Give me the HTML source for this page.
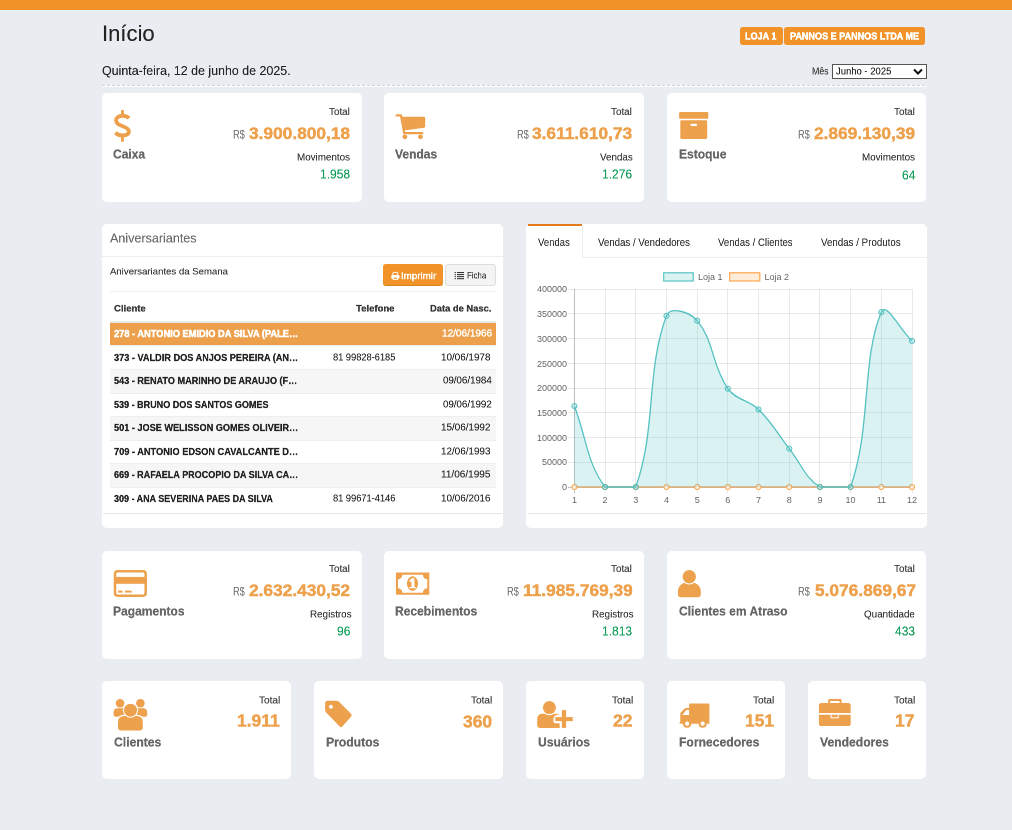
<!DOCTYPE html>
<html><head><meta charset="utf-8"><title>Início</title>
<style>
html,body{margin:0;padding:0}
body{width:1012px;height:830px;background:#e9edf1;position:relative;overflow:hidden;font-family:"Liberation Sans",sans-serif}
.t{position:absolute;white-space:nowrap;transform-origin:0 0;will-change:transform}
.b{position:absolute}
svg text{font-family:"Liberation Sans",sans-serif}
</style></head><body>
<div class="b" style="left:0px;top:0px;width:1012.00px;height:10.00px;background:#f29329"></div>
<div class="b" style="left:0px;top:10px;width:1012.00px;height:1.00px;background:#e6f0fa"></div>
<div class="t" style="left:101.82px;top:22.54px;font-size:43.60px;line-height:43.60px;font-weight:normal;color:#222;-webkit-text-stroke:0.24px #222;transform:scale(0.50487,0.5)">Início</div>
<div class="t" style="left:102.34px;top:63.92px;font-size:26.45px;line-height:26.45px;font-weight:normal;color:#222;-webkit-text-stroke:0.24px #222;transform:scale(0.47005,0.5)">Quinta-feira, 12 de junho de 2025.</div>
<div class="b" style="left:740px;top:27px;width:43.00px;height:18.00px;background:#f19329;border-radius:3px"></div>
<div class="b" style="left:784.2px;top:27px;width:140.80px;height:18.00px;background:#f19329;border-radius:3px"></div>
<div class="t" style="left:745.44px;top:30.75px;font-size:20.06px;line-height:20.06px;font-weight:bold;color:#fff;-webkit-text-stroke:1.10px #fff;transform:scale(0.45166,0.5)">LOJA 1</div>
<div class="t" style="left:790.00px;top:30.75px;font-size:20.06px;line-height:20.06px;font-weight:bold;color:#fff;-webkit-text-stroke:1.10px #fff;transform:scale(0.45198,0.5)">PANNOS E PANNOS LTDA ME</div>
<div class="t" style="left:812.30px;top:65.80px;font-size:20.93px;line-height:20.93px;font-weight:normal;color:#333;-webkit-text-stroke:0.24px #333;transform:scale(0.41850,0.5)">Mês</div>
<div class="b" style="left:832px;top:64px;width:95.00px;height:15.00px;background:#fff;border:1px solid #555;box-sizing:border-box"></div>
<div class="t" style="left:835.72px;top:66.39px;font-size:20.35px;line-height:20.35px;font-weight:normal;color:#222;-webkit-text-stroke:0.24px #222;transform:scale(0.46597,0.5)">Junho - 2025</div>
<svg class="b" style="left:912px;top:68px" width="12" height="8" viewBox="0 0 12 8"><path d="M2 1.5 L6 5.5 L10 1.5" fill="none" stroke="#111" stroke-width="2"/></svg>
<div class="b" style="left:102px;top:85px;width:824.00px;height:1.00px;background:repeating-linear-gradient(90deg,#cdd2d7 0 3px,#fff 3px 5px)"></div>
<div class="b" style="left:102px;top:86px;width:824.00px;height:1.00px;background:#fff"></div>
<div class="b" style="left:102px;top:93px;width:260.00px;height:109.00px;background:#fff;border-radius:5px"></div>
<div class="b" style="left:384px;top:93px;width:260.00px;height:109.00px;background:#fff;border-radius:5px"></div>
<div class="b" style="left:666.5px;top:93px;width:259.50px;height:109.00px;background:#fff;border-radius:5px"></div>
<div class="t" style="left:329.49px;top:107.09px;font-size:19.77px;line-height:19.77px;font-weight:normal;color:#333;-webkit-text-stroke:0.24px #333;transform:scale(0.50000,0.5)">Total</div>
<div class="t" style="left:249.25px;top:124.85px;font-size:33.43px;line-height:33.43px;font-weight:bold;color:#eea14c;-webkit-text-stroke:0.90px #eea14c;transform:scale(0.51800,0.5)">3.900.800,18</div>
<div class="t" style="left:233.39px;top:129.16px;font-size:23.26px;line-height:23.26px;font-weight:normal;color:#777;-webkit-text-stroke:0.24px #777;transform:scale(0.39500,0.5)">R$</div>
<div class="t" style="left:297.33px;top:152.16px;font-size:20.93px;line-height:20.93px;font-weight:normal;color:#333;-webkit-text-stroke:0.24px #333;transform:scale(0.47000,0.5)">Movimentos</div>
<div class="t" style="left:320.34px;top:168.42px;font-size:25.00px;line-height:25.00px;font-weight:normal;color:#079a53;-webkit-text-stroke:0.24px #079a53;transform:scale(0.48000,0.5)">1.958</div>
<div class="t" style="left:113.42px;top:148.05px;font-size:25.87px;line-height:25.87px;font-weight:bold;color:#666;-webkit-text-stroke:0.50px #666;transform:scale(0.46500,0.5)">Caixa</div>
<div class="t" style="left:611.49px;top:107.09px;font-size:19.77px;line-height:19.77px;font-weight:normal;color:#333;-webkit-text-stroke:0.24px #333;transform:scale(0.50000,0.5)">Total</div>
<div class="t" style="left:532.20px;top:124.85px;font-size:33.43px;line-height:33.43px;font-weight:bold;color:#eea14c;-webkit-text-stroke:0.90px #eea14c;transform:scale(0.51800,0.5)">3.611.610,73</div>
<div class="t" style="left:516.52px;top:129.16px;font-size:23.26px;line-height:23.26px;font-weight:normal;color:#777;-webkit-text-stroke:0.24px #777;transform:scale(0.39500,0.5)">R$</div>
<div class="t" style="left:599.54px;top:152.16px;font-size:20.93px;line-height:20.93px;font-weight:normal;color:#333;-webkit-text-stroke:0.24px #333;transform:scale(0.47000,0.5)">Vendas</div>
<div class="t" style="left:602.34px;top:168.42px;font-size:25.00px;line-height:25.00px;font-weight:normal;color:#079a53;-webkit-text-stroke:0.24px #079a53;transform:scale(0.48000,0.5)">1.276</div>
<div class="t" style="left:395.42px;top:148.05px;font-size:25.87px;line-height:25.87px;font-weight:bold;color:#666;-webkit-text-stroke:0.50px #666;transform:scale(0.46500,0.5)">Vendas</div>
<div class="t" style="left:893.99px;top:107.09px;font-size:19.77px;line-height:19.77px;font-weight:normal;color:#333;-webkit-text-stroke:0.24px #333;transform:scale(0.50000,0.5)">Total</div>
<div class="t" style="left:813.75px;top:124.85px;font-size:33.43px;line-height:33.43px;font-weight:bold;color:#eea14c;-webkit-text-stroke:0.90px #eea14c;transform:scale(0.51800,0.5)">2.869.130,39</div>
<div class="t" style="left:797.89px;top:129.16px;font-size:23.26px;line-height:23.26px;font-weight:normal;color:#777;-webkit-text-stroke:0.24px #777;transform:scale(0.39500,0.5)">R$</div>
<div class="t" style="left:861.83px;top:152.16px;font-size:20.93px;line-height:20.93px;font-weight:normal;color:#333;-webkit-text-stroke:0.24px #333;transform:scale(0.47000,0.5)">Movimentos</div>
<div class="t" style="left:901.52px;top:169.22px;font-size:25.00px;line-height:25.00px;font-weight:normal;color:#079a53;-webkit-text-stroke:0.24px #079a53;transform:scale(0.48000,0.5)">64</div>
<div class="t" style="left:678.72px;top:148.05px;font-size:25.87px;line-height:25.87px;font-weight:bold;color:#666;-webkit-text-stroke:0.50px #666;transform:scale(0.46500,0.5)">Estoque</div>
<svg class="b" style="left:108px;top:105px" width="30" height="40" viewBox="108 105 30 40">
<path d="M129.2,118.0 C127.4,116.4 125,115.7 122.6,115.7 C118.6,115.7 116.1,117.7 116.1,120.5 C116.1,124.2 119.8,125.1 123.4,126.5 C127,127.9 128.9,129.4 128.9,131.6 C128.9,134.3 126.2,135.5 122.6,135.5 C119.6,135.5 117.1,134.4 115.4,132.6" fill="none" stroke="#eea14c" stroke-width="3.85"/>
<rect x="121.0" y="110.1" width="2.9" height="5" fill="#eea14c"/>
<rect x="121.0" y="135.5" width="2.9" height="6.2" fill="#eea14c"/>
</svg>
<svg class="b" style="left:390px;top:110px" width="40" height="32" viewBox="390 110 40 32">
<path d="M396.6,115.4 H401.0 L404.3,133.2 H422.3" fill="none" stroke="#eea14c" stroke-width="2.3" stroke-linecap="round" stroke-linejoin="round"/>
<path d="M401.3,116.8 H424 Q425.2,116.8 425.2,118 V126.6 Q425.2,127.6 424.2,127.8 L403.9,130.4 Z" fill="#eea14c"/>
<circle cx="404.9" cy="136.8" r="2.4" fill="#eea14c"/><circle cx="420.5" cy="136.8" r="2.4" fill="#eea14c"/>
</svg>
<svg class="b" style="left:679px;top:112px" width="30" height="28" viewBox="0 0 30 28">
<rect x="0.1" y="0.1" width="29.2" height="6.6" rx="1.2" fill="#eea14c"/>
<rect x="1.3" y="8.2" width="26.9" height="18.8" rx="1.2" fill="#eea14c"/>
<rect x="11.4" y="11.7" width="6.8" height="2.3" rx="1.1" fill="#fff"/>
</svg>
<div class="b" style="left:102px;top:224px;width:401.00px;height:304.00px;background:#fff;border-radius:5px"></div>
<div class="b" style="left:102px;top:256px;width:401.00px;height:1.00px;background:#eeeeee"></div>
<div class="t" style="left:110.24px;top:232.17px;font-size:25.58px;line-height:25.58px;font-weight:normal;color:#666;-webkit-text-stroke:0.24px #666;transform:scale(0.49076,0.5)">Aniversariantes</div>
<div class="t" style="left:110.00px;top:267.12px;font-size:18.90px;line-height:18.90px;font-weight:normal;color:#333;-webkit-text-stroke:0.24px #333;transform:scale(0.50830,0.5)">Aniversariantes da Semana</div>
<div class="b" style="left:383px;top:264.2px;width:60.00px;height:22.30px;background:#f19329;border-radius:3px;border-bottom:1px solid #d98420;box-sizing:border-box"></div>
<div class="t" style="left:401.04px;top:271.22px;font-size:19.19px;line-height:19.19px;font-weight:normal;color:#fff;-webkit-text-stroke:0.80px #fff;transform:scale(0.50803,0.5)">Imprimir</div>
<svg class="b" style="left:390px;top:271px" width="11" height="10" viewBox="390 271 11 10">
<rect x="392.9" y="272.4" width="4.9" height="3.4" rx="0.5" fill="none" stroke="#fff" stroke-width="1"/>
<rect x="391.2" y="275.1" width="8.3" height="3.6" rx="1.3" fill="#fff"/>
<rect x="393.2" y="277.2" width="4.3" height="2.2" fill="#f19329" stroke="#fff" stroke-width="1"/>
</svg>
<div class="b" style="left:445.4px;top:264.2px;width:50.30px;height:22.30px;background:#f4f4f4;border:1px solid #dddddd;border-radius:3px;box-sizing:border-box"></div>
<svg class="b" style="left:450px;top:270px" width="16" height="11" viewBox="450 270 16 11"><rect x="454.6" y="272.0" width="1.3" height="1.05" fill="#333"/><rect x="457.0" y="272.0" width="7.0" height="1.05" fill="#333"/><rect x="454.6" y="274.05" width="1.3" height="1.05" fill="#333"/><rect x="457.0" y="274.05" width="7.0" height="1.05" fill="#333"/><rect x="454.6" y="276.1" width="1.3" height="1.05" fill="#333"/><rect x="457.0" y="276.1" width="7.0" height="1.05" fill="#333"/><rect x="454.6" y="278.15" width="1.3" height="1.05" fill="#333"/><rect x="457.0" y="278.15" width="7.0" height="1.05" fill="#333"/></svg>
<div class="t" style="left:467.42px;top:271.47px;font-size:18.60px;line-height:18.60px;font-weight:normal;color:#333;-webkit-text-stroke:0.24px #333;transform:scale(0.42239,0.5)">Ficha</div>
<div class="b" style="left:110px;top:291px;width:386.00px;height:1.00px;background:#eeeeee"></div>
<div class="t" style="left:113.56px;top:303.66px;font-size:18.90px;line-height:18.90px;font-weight:bold;color:#333;-webkit-text-stroke:0.50px #333;transform:scale(0.50300,0.5)">Cliente</div>
<div class="t" style="left:356.34px;top:303.66px;font-size:18.90px;line-height:18.90px;font-weight:bold;color:#333;-webkit-text-stroke:0.50px #333;transform:scale(0.50447,0.5)">Telefone</div>
<div class="t" style="left:429.86px;top:303.66px;font-size:18.90px;line-height:18.90px;font-weight:bold;color:#333;-webkit-text-stroke:0.50px #333;transform:scale(0.49505,0.5)">Data de Nasc.</div>
<div class="b" style="left:110px;top:321px;width:386.00px;height:2.00px;background:#e8e8e8"></div>
<div class="b" style="left:110px;top:323px;width:386.00px;height:22.00px;background:#eda04c"></div>
<div class="t" style="left:114.06px;top:329.11px;font-size:19.77px;line-height:19.77px;font-weight:bold;color:#fff;-webkit-text-stroke:1.10px #fff;transform:scale(0.46899,0.5)">278 - ANTONIO EMIDIO DA SILVA (PALE…</div>
<div class="t" style="left:441.78px;top:328.19px;font-size:20.06px;line-height:20.06px;font-weight:normal;color:#fff;-webkit-text-stroke:0.80px #fff;transform:scale(0.49955,0.5)">12/06/1966</div>
<div class="b" style="left:110px;top:345px;width:386.00px;height:1.00px;background:#eeeeee"></div>
<div class="t" style="left:114.06px;top:352.75px;font-size:19.77px;line-height:19.77px;font-weight:bold;color:#222;-webkit-text-stroke:0.50px #222;transform:scale(0.46420,0.5)">373 - VALDIR DOS ANJOS PEREIRA (AN…</div>
<div class="t" style="left:332.72px;top:351.83px;font-size:20.06px;line-height:20.06px;font-weight:normal;color:#222;-webkit-text-stroke:0.24px #222;transform:scale(0.46198,0.5)">81 99828-6185</div>
<div class="t" style="left:441.38px;top:351.83px;font-size:20.06px;line-height:20.06px;font-weight:normal;color:#222;-webkit-text-stroke:0.24px #222;transform:scale(0.49239,0.5)">10/06/1978</div>
<div class="b" style="left:110px;top:369px;width:386.00px;height:1.00px;background:#eeeeee"></div>
<div class="b" style="left:110px;top:370px;width:386.00px;height:22.70px;background:#f6f6f6"></div>
<div class="t" style="left:113.82px;top:376.31px;font-size:19.77px;line-height:19.77px;font-weight:bold;color:#222;-webkit-text-stroke:0.50px #222;transform:scale(0.46124,0.5)">543 - RENATO MARINHO DE ARAUJO (F…</div>
<div class="t" style="left:442.58px;top:375.39px;font-size:20.06px;line-height:20.06px;font-weight:normal;color:#222;-webkit-text-stroke:0.24px #222;transform:scale(0.48518,0.5)">09/06/1984</div>
<div class="b" style="left:110px;top:392.7px;width:386.00px;height:1.00px;background:#eeeeee"></div>
<div class="t" style="left:113.66px;top:399.75px;font-size:19.77px;line-height:19.77px;font-weight:bold;color:#222;-webkit-text-stroke:0.50px #222;transform:scale(0.45724,0.5)">539 - BRUNO DOS SANTOS GOMES</div>
<div class="t" style="left:442.58px;top:398.83px;font-size:20.06px;line-height:20.06px;font-weight:normal;color:#222;-webkit-text-stroke:0.24px #222;transform:scale(0.48518,0.5)">09/06/1992</div>
<div class="b" style="left:110px;top:416px;width:386.00px;height:1.00px;background:#eeeeee"></div>
<div class="b" style="left:110px;top:417px;width:386.00px;height:22.60px;background:#f6f6f6"></div>
<div class="t" style="left:114.06px;top:423.31px;font-size:19.77px;line-height:19.77px;font-weight:bold;color:#222;-webkit-text-stroke:0.50px #222;transform:scale(0.46332,0.5)">501 - JOSE WELISSON GOMES OLIVEIR…</div>
<div class="t" style="left:441.38px;top:422.39px;font-size:20.06px;line-height:20.06px;font-weight:normal;color:#222;-webkit-text-stroke:0.24px #222;transform:scale(0.49239,0.5)">15/06/1992</div>
<div class="b" style="left:110px;top:439.6px;width:386.00px;height:1.00px;background:#eeeeee"></div>
<div class="t" style="left:114.06px;top:446.75px;font-size:19.77px;line-height:19.77px;font-weight:bold;color:#222;-webkit-text-stroke:0.50px #222;transform:scale(0.46680,0.5)">709 - ANTONIO EDSON CAVALCANTE D…</div>
<div class="t" style="left:441.38px;top:445.83px;font-size:20.06px;line-height:20.06px;font-weight:normal;color:#222;-webkit-text-stroke:0.24px #222;transform:scale(0.49239,0.5)">12/06/1993</div>
<div class="b" style="left:110px;top:463.3px;width:386.00px;height:1.00px;background:#eeeeee"></div>
<div class="b" style="left:110px;top:464.3px;width:386.00px;height:22.70px;background:#f6f6f6"></div>
<div class="t" style="left:114.06px;top:470.19px;font-size:19.77px;line-height:19.77px;font-weight:bold;color:#222;-webkit-text-stroke:0.50px #222;transform:scale(0.45788,0.5)">669 - RAFAELA PROCOPIO DA SILVA CA…</div>
<div class="t" style="left:441.38px;top:469.27px;font-size:20.06px;line-height:20.06px;font-weight:normal;color:#222;-webkit-text-stroke:0.24px #222;transform:scale(0.49978,0.5)">11/06/1995</div>
<div class="b" style="left:110px;top:487px;width:386.00px;height:1.00px;background:#eeeeee"></div>
<div class="t" style="left:113.74px;top:493.75px;font-size:19.77px;line-height:19.77px;font-weight:bold;color:#222;-webkit-text-stroke:0.50px #222;transform:scale(0.45434,0.5)">309 - ANA SEVERINA PAES DA SILVA</div>
<div class="t" style="left:332.72px;top:492.83px;font-size:20.06px;line-height:20.06px;font-weight:normal;color:#222;-webkit-text-stroke:0.24px #222;transform:scale(0.46198,0.5)">81 99671-4146</div>
<div class="t" style="left:441.38px;top:492.83px;font-size:20.06px;line-height:20.06px;font-weight:normal;color:#222;-webkit-text-stroke:0.24px #222;transform:scale(0.49239,0.5)">10/06/2016</div>
<div class="b" style="left:103px;top:513px;width:399.00px;height:1.00px;background:#e6e6e6"></div>
<div class="b" style="left:526px;top:224px;width:401.00px;height:304.00px;background:#fff;border-radius:5px"></div>
<div class="b" style="left:527.7px;top:224px;width:54.30px;height:2.00px;background:#e37c1c"></div>
<div class="b" style="left:582px;top:226px;width:1.00px;height:31.50px;background:#eeeeee"></div>
<div class="b" style="left:582px;top:257px;width:345.00px;height:1.00px;background:#eeeeee"></div>
<div class="t" style="left:538.08px;top:236.97px;font-size:22.09px;line-height:22.09px;font-weight:normal;color:#333;-webkit-text-stroke:0.24px #333;transform:scale(0.43253,0.5)">Vendas</div>
<div class="t" style="left:597.52px;top:236.97px;font-size:22.09px;line-height:22.09px;font-weight:normal;color:#333;-webkit-text-stroke:0.24px #333;transform:scale(0.43814,0.5)">Vendas / Vendedores</div>
<div class="t" style="left:717.64px;top:236.97px;font-size:22.09px;line-height:22.09px;font-weight:normal;color:#333;-webkit-text-stroke:0.24px #333;transform:scale(0.43426,0.5)">Vendas / Clientes</div>
<div class="t" style="left:820.80px;top:236.97px;font-size:22.09px;line-height:22.09px;font-weight:normal;color:#333;-webkit-text-stroke:0.24px #333;transform:scale(0.44143,0.5)">Vendas / Produtos</div>
<svg class="b" style="left:0;top:0" width="1012" height="830" viewBox="0 0 1012 830" font-family="Liberation Sans" font-size="9" fill="#666"><line x1="568" y1="289.50" x2="912.00" y2="289.50" stroke="rgba(0,0,0,0.085)" stroke-width="1"/>
<line x1="568" y1="313.50" x2="912.00" y2="313.50" stroke="rgba(0,0,0,0.085)" stroke-width="1"/>
<line x1="568" y1="338.50" x2="912.00" y2="338.50" stroke="rgba(0,0,0,0.085)" stroke-width="1"/>
<line x1="568" y1="363.50" x2="912.00" y2="363.50" stroke="rgba(0,0,0,0.085)" stroke-width="1"/>
<line x1="568" y1="388.50" x2="912.00" y2="388.50" stroke="rgba(0,0,0,0.085)" stroke-width="1"/>
<line x1="568" y1="412.50" x2="912.00" y2="412.50" stroke="rgba(0,0,0,0.085)" stroke-width="1"/>
<line x1="568" y1="437.50" x2="912.00" y2="437.50" stroke="rgba(0,0,0,0.085)" stroke-width="1"/>
<line x1="568" y1="462.50" x2="912.00" y2="462.50" stroke="rgba(0,0,0,0.085)" stroke-width="1"/>
<line x1="568" y1="487.50" x2="912.00" y2="487.50" stroke="rgba(0,0,0,0.25)" stroke-width="1"/>
<line x1="574.50" y1="289" x2="574.50" y2="493" stroke="rgba(0,0,0,0.25)" stroke-width="1"/>
<line x1="605.50" y1="289" x2="605.50" y2="493" stroke="rgba(0,0,0,0.085)" stroke-width="1"/>
<line x1="635.50" y1="289" x2="635.50" y2="493" stroke="rgba(0,0,0,0.085)" stroke-width="1"/>
<line x1="666.50" y1="289" x2="666.50" y2="493" stroke="rgba(0,0,0,0.085)" stroke-width="1"/>
<line x1="697.50" y1="289" x2="697.50" y2="493" stroke="rgba(0,0,0,0.085)" stroke-width="1"/>
<line x1="727.50" y1="289" x2="727.50" y2="493" stroke="rgba(0,0,0,0.085)" stroke-width="1"/>
<line x1="758.50" y1="289" x2="758.50" y2="493" stroke="rgba(0,0,0,0.085)" stroke-width="1"/>
<line x1="789.50" y1="289" x2="789.50" y2="493" stroke="rgba(0,0,0,0.085)" stroke-width="1"/>
<line x1="819.50" y1="289" x2="819.50" y2="493" stroke="rgba(0,0,0,0.085)" stroke-width="1"/>
<line x1="850.50" y1="289" x2="850.50" y2="493" stroke="rgba(0,0,0,0.085)" stroke-width="1"/>
<line x1="881.50" y1="289" x2="881.50" y2="493" stroke="rgba(0,0,0,0.085)" stroke-width="1"/>
<line x1="912.50" y1="289" x2="912.50" y2="493" stroke="rgba(0,0,0,0.085)" stroke-width="1"/>
<text x="567" y="292.40" text-anchor="end">400000</text>
<text x="567" y="317.12" text-anchor="end">350000</text>
<text x="567" y="341.85" text-anchor="end">300000</text>
<text x="567" y="366.57" text-anchor="end">250000</text>
<text x="567" y="391.30" text-anchor="end">200000</text>
<text x="567" y="416.02" text-anchor="end">150000</text>
<text x="567" y="440.75" text-anchor="end">100000</text>
<text x="567" y="465.47" text-anchor="end">50000</text>
<text x="567" y="490.20" text-anchor="end">0</text>
<text x="574.40" y="502.8" text-anchor="middle">1</text>
<text x="605.09" y="502.8" text-anchor="middle">2</text>
<text x="635.78" y="502.8" text-anchor="middle">3</text>
<text x="666.47" y="502.8" text-anchor="middle">4</text>
<text x="697.16" y="502.8" text-anchor="middle">5</text>
<text x="727.85" y="502.8" text-anchor="middle">6</text>
<text x="758.55" y="502.8" text-anchor="middle">7</text>
<text x="789.24" y="502.8" text-anchor="middle">8</text>
<text x="819.93" y="502.8" text-anchor="middle">9</text>
<text x="850.62" y="502.8" text-anchor="middle">10</text>
<text x="881.31" y="502.8" text-anchor="middle">11</text>
<text x="912.00" y="502.8" text-anchor="middle">12</text>
<line x1="574.4" y1="487.0" x2="912.0" y2="487.0" stroke="#eeaa6e" stroke-width="1.3"/>
<circle cx="574.40" cy="487.0" r="2.6" fill="#ffecd9" stroke="#ff9f40" stroke-width="1"/>
<circle cx="605.09" cy="487.0" r="2.6" fill="#ffecd9" stroke="#ff9f40" stroke-width="1"/>
<circle cx="635.78" cy="487.0" r="2.6" fill="#ffecd9" stroke="#ff9f40" stroke-width="1"/>
<circle cx="666.47" cy="487.0" r="2.6" fill="#ffecd9" stroke="#ff9f40" stroke-width="1"/>
<circle cx="697.16" cy="487.0" r="2.6" fill="#ffecd9" stroke="#ff9f40" stroke-width="1"/>
<circle cx="727.85" cy="487.0" r="2.6" fill="#ffecd9" stroke="#ff9f40" stroke-width="1"/>
<circle cx="758.55" cy="487.0" r="2.6" fill="#ffecd9" stroke="#ff9f40" stroke-width="1"/>
<circle cx="789.24" cy="487.0" r="2.6" fill="#ffecd9" stroke="#ff9f40" stroke-width="1"/>
<circle cx="819.93" cy="487.0" r="2.6" fill="#ffecd9" stroke="#ff9f40" stroke-width="1"/>
<circle cx="850.62" cy="487.0" r="2.6" fill="#ffecd9" stroke="#ff9f40" stroke-width="1"/>
<circle cx="881.31" cy="487.0" r="2.6" fill="#ffecd9" stroke="#ff9f40" stroke-width="1"/>
<circle cx="912.00" cy="487.0" r="2.6" fill="#ffecd9" stroke="#ff9f40" stroke-width="1"/>
<path d="M574.40,406.05 C586.68,438.43 586.96,463.09 605.09,487.00 C611.52,487.00 632.10,487.00 635.78,487.00 C656.65,428.79 645.64,372.24 666.47,315.80 C670.19,305.72 689.94,312.13 697.16,320.70 C714.50,341.28 711.45,364.98 727.85,388.69 C736.00,400.46 748.07,399.19 758.55,409.41 C772.63,423.16 776.88,433.01 789.24,448.63 C801.43,464.04 804.81,477.55 819.93,487.00 C829.37,487.00 847.00,487.00 850.62,487.00 C871.55,427.37 861.45,359.43 881.31,312.14 C886.01,300.96 899.72,329.35 912.00,340.83 L912.0,487.0 L574.4,487.0 Z" fill="rgba(75,192,192,0.2)" stroke="none"/>
<path d="M574.40,406.05 C586.68,438.43 586.96,463.09 605.09,487.00 C611.52,487.00 632.10,487.00 635.78,487.00 C656.65,428.79 645.64,372.24 666.47,315.80 C670.19,305.72 689.94,312.13 697.16,320.70 C714.50,341.28 711.45,364.98 727.85,388.69 C736.00,400.46 748.07,399.19 758.55,409.41 C772.63,423.16 776.88,433.01 789.24,448.63 C801.43,464.04 804.81,477.55 819.93,487.00 C829.37,487.00 847.00,487.00 850.62,487.00 C871.55,427.37 861.45,359.43 881.31,312.14 C886.01,300.96 899.72,329.35 912.00,340.83" fill="none" stroke="#55c1c1" stroke-width="1.3"/>
<circle cx="574.40" cy="406.05" r="2.6" fill="rgba(75,192,192,0.2)" stroke="#4bc0c0" stroke-width="1"/>
<circle cx="605.09" cy="487.00" r="2.6" fill="rgba(75,192,192,0.2)" stroke="#4bc0c0" stroke-width="1"/>
<circle cx="635.78" cy="487.00" r="2.6" fill="rgba(75,192,192,0.2)" stroke="#4bc0c0" stroke-width="1"/>
<circle cx="666.47" cy="315.80" r="2.6" fill="rgba(75,192,192,0.2)" stroke="#4bc0c0" stroke-width="1"/>
<circle cx="697.16" cy="320.70" r="2.6" fill="rgba(75,192,192,0.2)" stroke="#4bc0c0" stroke-width="1"/>
<circle cx="727.85" cy="388.69" r="2.6" fill="rgba(75,192,192,0.2)" stroke="#4bc0c0" stroke-width="1"/>
<circle cx="758.55" cy="409.41" r="2.6" fill="rgba(75,192,192,0.2)" stroke="#4bc0c0" stroke-width="1"/>
<circle cx="789.24" cy="448.63" r="2.6" fill="rgba(75,192,192,0.2)" stroke="#4bc0c0" stroke-width="1"/>
<circle cx="819.93" cy="487.00" r="2.6" fill="rgba(75,192,192,0.2)" stroke="#4bc0c0" stroke-width="1"/>
<circle cx="850.62" cy="487.00" r="2.6" fill="rgba(75,192,192,0.2)" stroke="#4bc0c0" stroke-width="1"/>
<circle cx="881.31" cy="312.14" r="2.6" fill="rgba(75,192,192,0.2)" stroke="#4bc0c0" stroke-width="1"/>
<circle cx="912.00" cy="340.83" r="2.6" fill="rgba(75,192,192,0.2)" stroke="#4bc0c0" stroke-width="1"/>
<rect x="663.7" y="272.8" width="29.5" height="8.2" fill="rgba(75,192,192,0.2)" stroke="#4bc0c0" stroke-width="1.1"/>
<text x="698" y="279.9">Loja 1</text>
<rect x="729.7" y="272.8" width="30.1" height="8.2" fill="rgba(255,159,64,0.2)" stroke="#ff9f40" stroke-width="1.1"/>
<text x="764.6" y="279.9">Loja 2</text></svg>
<div class="b" style="left:527.5px;top:513px;width:398.00px;height:1.00px;background:#e6e6e6"></div>
<div class="b" style="left:102px;top:551px;width:260.00px;height:108.00px;background:#fff;border-radius:5px"></div>
<div class="b" style="left:384px;top:551px;width:260.00px;height:108.00px;background:#fff;border-radius:5px"></div>
<div class="b" style="left:666.5px;top:551px;width:259.50px;height:108.00px;background:#fff;border-radius:5px"></div>
<div class="t" style="left:329.49px;top:563.63px;font-size:19.77px;line-height:19.77px;font-weight:normal;color:#333;-webkit-text-stroke:0.24px #333;transform:scale(0.50000,0.5)">Total</div>
<div class="t" style="left:249.25px;top:582.19px;font-size:33.43px;line-height:33.43px;font-weight:bold;color:#eea14c;-webkit-text-stroke:0.90px #eea14c;transform:scale(0.51800,0.5)">2.632.430,52</div>
<div class="t" style="left:233.39px;top:585.80px;font-size:23.26px;line-height:23.26px;font-weight:normal;color:#777;-webkit-text-stroke:0.24px #777;transform:scale(0.39500,0.5)">R$</div>
<div class="t" style="left:309.61px;top:608.80px;font-size:20.93px;line-height:20.93px;font-weight:normal;color:#333;-webkit-text-stroke:0.24px #333;transform:scale(0.47000,0.5)">Registros</div>
<div class="t" style="left:337.02px;top:624.96px;font-size:25.00px;line-height:25.00px;font-weight:normal;color:#079a53;-webkit-text-stroke:0.24px #079a53;transform:scale(0.48000,0.5)">96</div>
<div class="t" style="left:113.42px;top:605.39px;font-size:25.87px;line-height:25.87px;font-weight:bold;color:#666;-webkit-text-stroke:0.50px #666;transform:scale(0.46500,0.5)">Pagamentos</div>
<div class="t" style="left:611.49px;top:563.63px;font-size:19.77px;line-height:19.77px;font-weight:normal;color:#333;-webkit-text-stroke:0.24px #333;transform:scale(0.50000,0.5)">Total</div>
<div class="t" style="left:523.37px;top:582.19px;font-size:33.43px;line-height:33.43px;font-weight:bold;color:#eea14c;-webkit-text-stroke:0.90px #eea14c;transform:scale(0.51800,0.5)">11.985.769,39</div>
<div class="t" style="left:507.04px;top:585.80px;font-size:23.26px;line-height:23.26px;font-weight:normal;color:#777;-webkit-text-stroke:0.24px #777;transform:scale(0.39500,0.5)">R$</div>
<div class="t" style="left:591.61px;top:608.80px;font-size:20.93px;line-height:20.93px;font-weight:normal;color:#333;-webkit-text-stroke:0.24px #333;transform:scale(0.47000,0.5)">Registros</div>
<div class="t" style="left:602.34px;top:624.96px;font-size:25.00px;line-height:25.00px;font-weight:normal;color:#079a53;-webkit-text-stroke:0.24px #079a53;transform:scale(0.48000,0.5)">1.813</div>
<div class="t" style="left:395.42px;top:605.39px;font-size:25.87px;line-height:25.87px;font-weight:bold;color:#666;-webkit-text-stroke:0.50px #666;transform:scale(0.46500,0.5)">Recebimentos</div>
<div class="t" style="left:893.99px;top:563.63px;font-size:19.77px;line-height:19.77px;font-weight:normal;color:#333;-webkit-text-stroke:0.24px #333;transform:scale(0.50000,0.5)">Total</div>
<div class="t" style="left:814.55px;top:582.19px;font-size:33.43px;line-height:33.43px;font-weight:bold;color:#eea14c;-webkit-text-stroke:0.90px #eea14c;transform:scale(0.51800,0.5)">5.076.869,67</div>
<div class="t" style="left:797.89px;top:585.80px;font-size:23.26px;line-height:23.26px;font-weight:normal;color:#777;-webkit-text-stroke:0.24px #777;transform:scale(0.39500,0.5)">R$</div>
<div class="t" style="left:863.99px;top:608.80px;font-size:20.93px;line-height:20.93px;font-weight:normal;color:#333;-webkit-text-stroke:0.24px #333;transform:scale(0.47000,0.5)">Quantidade</div>
<div class="t" style="left:894.84px;top:624.96px;font-size:25.00px;line-height:25.00px;font-weight:normal;color:#079a53;-webkit-text-stroke:0.24px #079a53;transform:scale(0.48000,0.5)">433</div>
<div class="t" style="left:678.72px;top:605.39px;font-size:25.87px;line-height:25.87px;font-weight:bold;color:#666;-webkit-text-stroke:0.50px #666;transform:scale(0.46500,0.5)">Clientes em Atraso</div>
<svg class="b" style="left:113px;top:569px" width="36" height="30" viewBox="0 0 36 30">
<rect x="2.0" y="2.3" width="30.7" height="24.4" rx="2.6" fill="none" stroke="#eea14c" stroke-width="2.5"/>
<rect x="1" y="7.9" width="33" height="6.9" fill="#eea14c"/>
<rect x="5.1" y="21.6" width="4.4" height="2" fill="#eea14c"/>
<rect x="11.9" y="21.6" width="6.7" height="2" fill="#eea14c"/>
</svg>
<svg class="b" style="left:392px;top:568px" width="42" height="32" viewBox="392 568 42 32">
<path fill-rule="evenodd" fill="#eea14c" d="M396.7 572.4 H428.5 Q429.3 572.4 429.3 573.2 V594 Q429.3 594.8 428.5 594.8 H396.7 Q395.9 594.8 395.9 594 V573.2 Q395.9 572.4 396.7 572.4 Z M402.4 574.8 H422.9 A4.4 4.4 0 0 0 427.3 579.2 V588.3 A4.4 4.4 0 0 0 422.9 592.7 H402.4 A4.4 4.4 0 0 0 398 588.3 V579.2 A4.4 4.4 0 0 0 402.4 574.8 Z"/>
<ellipse cx="412.5" cy="583.6" rx="5.6" ry="7.3" fill="#eea14c"/>
<path fill="#fff" d="M411.5 578.2 H414.4 V586.9 H415.9 V588.3 H409.2 V586.9 H411.5 V581.4 L409.6 581.9 V580.4 Z"/>
</svg>
<svg class="b" style="left:677px;top:569px" width="26" height="30" viewBox="0 0 26 30">
<path d="M9.2 13.7 H15.5 A8.3 8.3 0 0 1 23.8 22 V25.2 A3 3 0 0 1 20.8 28.2 H3.9 A3 3 0 0 1 0.9 25.2 V22 A8.3 8.3 0 0 1 9.2 13.7 Z" fill="#eea14c"/>
<circle cx="12.3" cy="7.7" r="7.9" fill="#fff"/>
<circle cx="12.3" cy="7.7" r="6.7" fill="#eea14c"/>
</svg>
<div class="b" style="left:102px;top:680.5px;width:189.00px;height:98.50px;background:#fff;border-radius:5px"></div>
<div class="b" style="left:314px;top:680.5px;width:189.00px;height:98.50px;background:#fff;border-radius:5px"></div>
<div class="b" style="left:526px;top:680.5px;width:118.00px;height:98.50px;background:#fff;border-radius:5px"></div>
<div class="b" style="left:666.5px;top:680.5px;width:118.50px;height:98.50px;background:#fff;border-radius:5px"></div>
<div class="b" style="left:808px;top:680.5px;width:118.00px;height:98.50px;background:#fff;border-radius:5px"></div>
<div class="t" style="left:258.54px;top:695.17px;font-size:20.06px;line-height:20.06px;font-weight:normal;color:#333;-webkit-text-stroke:0.24px #333;transform:scale(0.50000,0.5)">Total</div>
<div class="t" style="left:237.04px;top:712.24px;font-size:34.88px;line-height:34.88px;font-weight:bold;color:#eea14c;-webkit-text-stroke:0.90px #eea14c;transform:scale(0.50000,0.5)">1.911</div>
<div class="t" style="left:114.00px;top:736.19px;font-size:25.58px;line-height:25.58px;font-weight:bold;color:#666;-webkit-text-stroke:0.50px #666;transform:scale(0.47500,0.5)">Clientes</div>
<div class="t" style="left:470.54px;top:695.17px;font-size:20.06px;line-height:20.06px;font-weight:normal;color:#333;-webkit-text-stroke:0.24px #333;transform:scale(0.50000,0.5)">Total</div>
<div class="t" style="left:462.63px;top:713.04px;font-size:34.88px;line-height:34.88px;font-weight:bold;color:#eea14c;-webkit-text-stroke:0.90px #eea14c;transform:scale(0.50000,0.5)">360</div>
<div class="t" style="left:326.00px;top:736.19px;font-size:25.58px;line-height:25.58px;font-weight:bold;color:#666;-webkit-text-stroke:0.50px #666;transform:scale(0.47500,0.5)">Produtos</div>
<div class="t" style="left:611.54px;top:695.17px;font-size:20.06px;line-height:20.06px;font-weight:normal;color:#333;-webkit-text-stroke:0.24px #333;transform:scale(0.50000,0.5)">Total</div>
<div class="t" style="left:613.32px;top:712.24px;font-size:34.88px;line-height:34.88px;font-weight:bold;color:#eea14c;-webkit-text-stroke:0.90px #eea14c;transform:scale(0.50000,0.5)">22</div>
<div class="t" style="left:538.00px;top:736.19px;font-size:25.58px;line-height:25.58px;font-weight:bold;color:#666;-webkit-text-stroke:0.50px #666;transform:scale(0.47500,0.5)">Usuários</div>
<div class="t" style="left:752.54px;top:695.17px;font-size:20.06px;line-height:20.06px;font-weight:normal;color:#333;-webkit-text-stroke:0.24px #333;transform:scale(0.50000,0.5)">Total</div>
<div class="t" style="left:744.63px;top:712.24px;font-size:34.88px;line-height:34.88px;font-weight:bold;color:#eea14c;-webkit-text-stroke:0.90px #eea14c;transform:scale(0.50000,0.5)">151</div>
<div class="t" style="left:678.50px;top:736.19px;font-size:25.58px;line-height:25.58px;font-weight:bold;color:#666;-webkit-text-stroke:0.50px #666;transform:scale(0.47500,0.5)">Fornecedores</div>
<div class="t" style="left:893.54px;top:695.17px;font-size:20.06px;line-height:20.06px;font-weight:normal;color:#333;-webkit-text-stroke:0.24px #333;transform:scale(0.50000,0.5)">Total</div>
<div class="t" style="left:895.32px;top:712.24px;font-size:34.88px;line-height:34.88px;font-weight:bold;color:#eea14c;-webkit-text-stroke:0.90px #eea14c;transform:scale(0.50000,0.5)">17</div>
<div class="t" style="left:820.00px;top:736.19px;font-size:25.58px;line-height:25.58px;font-weight:bold;color:#666;-webkit-text-stroke:0.50px #666;transform:scale(0.47500,0.5)">Vendedores</div>
<svg class="b" style="left:112px;top:697px" width="38" height="36" viewBox="112 697 38 36" >
<circle cx="120.1" cy="703.2" r="4.3" fill="#eea14c"/>
<circle cx="140.4" cy="703.2" r="4.3" fill="#eea14c"/>
<path d="M113.6 714.7 V712.3 Q113.6 708.2 117.8 708.2 H124 V716.7 H115.6 Q113.6 716.7 113.6 714.7 Z" fill="#eea14c"/>
<path d="M147.2 714.7 V712.3 Q147.2 708.2 143 708.2 H136.8 V716.7 H145.2 Q147.2 716.7 147.2 714.7 Z" fill="#eea14c"/>
<path d="M118 727.2 V722.2 Q118 716 124.2 716 H136.6 Q142.8 716 142.8 722.2 V727.2 Q142.8 730.4 139.6 730.4 H121.2 Q118 730.4 118 727.2 Z" fill="#fff" stroke="#fff" stroke-width="2.4"/>
<path d="M118 727.2 V722.2 Q118 716 124.2 716 H136.6 Q142.8 716 142.8 722.2 V727.2 Q142.8 730.4 139.6 730.4 H121.2 Q118 730.4 118 727.2 Z" fill="#eea14c"/>
<circle cx="130.5" cy="710.2" r="7.6" fill="#fff"/>
<circle cx="130.5" cy="710.2" r="6.5" fill="#eea14c"/>
</svg>
<svg class="b" style="left:324px;top:700px" width="30" height="30" viewBox="324 700 30 30">
<path fill-rule="evenodd" fill="#eea14c" d="M327.5 700.8 H336.5 Q338 700.8 339 701.8 L351 713.8 Q352.5 715.3 351 716.8 L342.3 726.4 Q341 727.9 339.7 726.4 L326.6 713 Q325.1 711.5 325.1 710 V703.2 Q325.1 700.8 327.5 700.8 Z M330.9 704.8 A2 2 0 1 0 330.9 708.8 A2 2 0 1 0 330.9 704.8 Z"/>
</svg>
<svg class="b" style="left:534px;top:698px" width="42" height="33" viewBox="534 698 42 33">
<path d="M537.2 725.6 V719.2 Q537.2 713.7 542.7 713.7 H557.6 Q558.6 713.7 559.2 714.5 Q555.5 714.6 554.3 716.4 Q553.4 717.6 553.4 719.2 V721.2 Q553.6 723.2 555.6 723.2 H559.7 V727.9 H539.5 Q537.2 727.9 537.2 725.6 Z" fill="#eea14c"/>
<circle cx="549.4" cy="707.6" r="7.7" fill="#fff"/>
<circle cx="549.4" cy="707.6" r="6.5" fill="#eea14c"/>
<rect x="555.3" y="717.1" width="17.5" height="4.0" fill="#eea14c"/>
<rect x="561.8" y="710.1" width="4.3" height="17.8" fill="#eea14c"/>
</svg>
<svg class="b" style="left:676px;top:700px" width="38" height="32" viewBox="676 700 38 32">
<path fill-rule="evenodd" fill="#eea14c" d="M689.9 703.6 H708.6 Q709.4 703.6 709.4 704.4 V722.9 Q709.4 723.7 708.6 723.7 H681.2 Q679.2 723.7 679.2 723 Q679.2 722.3 680.3 722.3 V713.4 Q680.3 712.8 680.7 712.4 L684.7 708.5 Q685.1 708.1 685.7 708.1 H689.1 V704.4 Q689.1 703.6 689.9 703.6 Z M686.3 710 H689.1 V714.9 H682.4 Z"/>
<circle cx="687.1" cy="723.7" r="4.1" fill="#eea14c"/><circle cx="702.7" cy="723.7" r="4.1" fill="#eea14c"/>
<circle cx="687.1" cy="723.7" r="2.1" fill="#fff"/><circle cx="702.7" cy="723.7" r="2.1" fill="#fff"/>
</svg>
<svg class="b" style="left:818px;top:698px" width="34" height="30" viewBox="818 698 34 30">
<path fill-rule="evenodd" fill="#eea14c" d="M829.6 699 H840.2 Q841.6 699 841.6 700.4 V703 H839.6 V701 H830.2 V703 H828.2 V700.4 Q828.2 699 829.6 699 Z"/>
<path d="M818.9 713 V705.5 Q818.9 702.9 821.5 702.9 H848.1 Q850.7 702.9 850.7 705.5 V713 Z" fill="#eea14c"/>
<path d="M818.9 714.8 H850.7 V723.5 Q850.7 726.1 848.1 726.1 H821.5 Q818.9 726.1 818.9 723.5 Z" fill="#eea14c"/>
<rect x="831.1" y="714.2" width="7.1" height="3.6" fill="#eea14c" stroke="#fff" stroke-width="1"/>
</svg>
</body></html>
